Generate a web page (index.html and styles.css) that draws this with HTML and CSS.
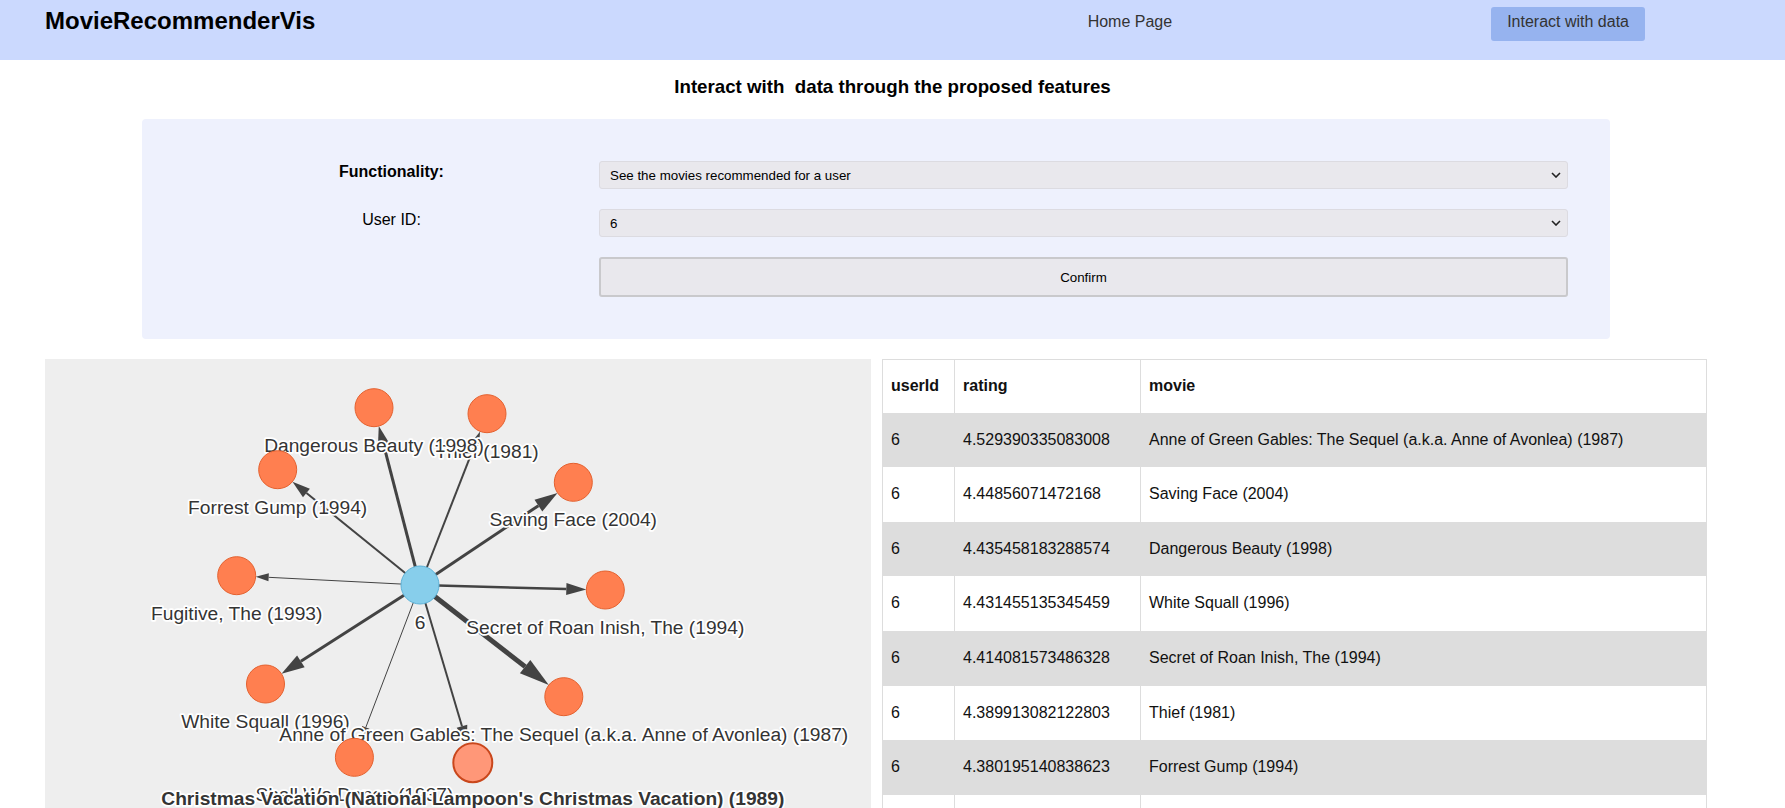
FILE: index.html
```html
<!DOCTYPE html>
<html lang="en">
<head>
<meta charset="utf-8">
<title>MovieRecommenderVis</title>
<link rel="stylesheet" href="styles.css">
</head>
<body>
<header class="topbar">
  <div class="brand">MovieRecommenderVis</div>
  <nav class="nav">
    <a class="nav-link" href="#">Home Page</a>
    <a class="nav-link active" href="#">Interact with data</a>
  </nav>
</header>
<main>
  <h3 class="page-title">Interact with&nbsp; data through the proposed features</h3>
  <section class="controls">
    <label class="ctl-label strong">Functionality:</label>
    <div class="select-wrap">
      <select class="select"><option>See the movies recommended for a user</option></select>
      <svg class="chev" width="10" height="6" viewBox="0 0 10 6"><path d="M1 1 L5 5 L9 1" fill="none" stroke="#222" stroke-width="1.6"/></svg>
    </div>
    <label class="ctl-label">User ID:</label>
    <div class="select-wrap">
      <select class="select"><option>6</option></select>
      <svg class="chev" width="10" height="6" viewBox="0 0 10 6"><path d="M1 1 L5 5 L9 1" fill="none" stroke="#222" stroke-width="1.6"/></svg>
    </div>
    <div></div>
    <button class="confirm" type="button">Confirm</button>
  </section>
  <section class="results">
    <div class="graph">
      <svg class="graph-svg" width="826" height="470" viewBox="0 0 826 470">
        <g class="edges">
          <line x1="375" y1="226" x2="339.55" y2="89.35" stroke-width="3"/>
          <polygon points="333.77,67.09 346.33,87.59 332.77,91.11"/>
          <line x1="375" y1="226" x2="428.52" y2="89.15" stroke-width="2"/>
          <polygon points="435.08,72.39 433.64,91.15 423.40,87.15"/>
          <line x1="375" y1="226" x2="261.45" y2="133.99" stroke-width="2"/>
          <polygon points="247.46,122.66 264.91,129.72 257.99,138.26"/>
          <line x1="375" y1="226" x2="223.66" y2="218.32" stroke-width="1"/>
          <polygon points="210.68,217.66 223.86,214.33 223.46,222.31"/>
          <line x1="375" y1="226" x2="493.40" y2="146.68" stroke-width="3"/>
          <polygon points="512.51,133.88 497.30,152.50 489.50,140.86"/>
          <line x1="375" y1="226" x2="521.32" y2="229.95" stroke-width="2.5"/>
          <polygon points="541.31,230.49 521.16,235.95 521.48,223.95"/>
          <line x1="375" y1="226" x2="255.87" y2="302.34" stroke-width="3"/>
          <polygon points="236.5,314.75 252.09,296.45 259.65,308.23"/>
          <line x1="375" y1="226" x2="480.11" y2="307.65" stroke-width="5"/>
          <polygon points="503.8,326.05 474.90,314.36 485.32,300.94"/>
          <line x1="375" y1="226" x2="320.79" y2="368.39" stroke-width="1"/>
          <polygon points="316.16,380.54 317.05,366.97 324.53,369.81"/>
          <line x1="375" y1="226" x2="416.97" y2="367.28" stroke-width="2"/>
          <polygon points="422.10,384.53 411.70,368.85 422.24,365.71"/>
        </g>
        <g class="node">
          <circle cx="442" cy="54.7" r="19"/>
          <text class="lbl" x="442" y="98.7">Thief (1981)</text>
        </g>
        <g class="node">
          <circle cx="329" cy="48.7" r="19"/>
          <text class="lbl" x="329" y="92.7">Dangerous Beauty (1998)</text>
        </g>
        <g class="node">
          <circle cx="232.7" cy="110.7" r="19"/>
          <text class="lbl" x="232.7" y="154.7">Forrest Gump (1994)</text>
        </g>
        <g class="node">
          <circle cx="191.7" cy="216.7" r="19"/>
          <text class="lbl" x="191.7" y="260.7">Fugitive, The (1993)</text>
        </g>
        <g class="node">
          <circle cx="528.3" cy="123.3" r="19"/>
          <text class="lbl" x="528.3" y="167.3">Saving Face (2004)</text>
        </g>
        <g class="node">
          <circle cx="560.3" cy="231" r="19"/>
          <text class="lbl" x="560.3" y="275">Secret of Roan Inish, The (1994)</text>
        </g>
        <g class="node user">
          <circle cx="375" cy="226" r="19"/>
          <text class="lbl" x="375" y="269.5">6</text>
        </g>
        <g class="node">
          <circle cx="220.5" cy="325" r="19"/>
          <text class="lbl" x="220.5" y="369">White Squall (1996)</text>
        </g>
        <g class="node">
          <circle cx="518.8" cy="337.7" r="19"/>
          <text class="lbl" x="518.8" y="381.7">Anne of Green Gables: The Sequel (a.k.a. Anne of Avonlea) (1987)</text>
        </g>
        <g class="node">
          <circle cx="309.4" cy="398.3" r="19"/>
          <text class="lbl" x="309.4" y="442.3">Shall We Dance (1937)</text>
        </g>
        <g class="node hover">
          <circle cx="427.8" cy="403.7" r="19.5"/>
          <text class="lbl bold" x="427.8" y="445.5">Christmas Vacation (National Lampoon's Christmas Vacation) (1989)</text>
        </g>
      </svg>
    </div>
    <table class="recs">
      <colgroup>
        <col class="c-user">
        <col class="c-rating">
        <col class="c-movie">
      </colgroup>
      <thead>
        <tr><th>userId</th><th>rating</th><th>movie</th></tr>
      </thead>
      <tbody>
        <tr><td>6</td><td>4.529390335083008</td><td>Anne of Green Gables: The Sequel (a.k.a. Anne of Avonlea) (1987)</td></tr>
        <tr><td>6</td><td>4.44856071472168</td><td>Saving Face (2004)</td></tr>
        <tr><td>6</td><td>4.435458183288574</td><td>Dangerous Beauty (1998)</td></tr>
        <tr><td>6</td><td>4.431455135345459</td><td>White Squall (1996)</td></tr>
        <tr><td>6</td><td>4.414081573486328</td><td>Secret of Roan Inish, The (1994)</td></tr>
        <tr><td>6</td><td>4.389913082122803</td><td>Thief (1981)</td></tr>
        <tr><td>6</td><td>4.380195140838623</td><td>Forrest Gump (1994)</td></tr>
        <tr><td>6</td><td>4.371287822723389</td><td>Fugitive, The (1993)</td></tr>
        <tr><td>6</td><td>4.368710517883301</td><td>Shall We Dance (1937)</td></tr>
        <tr><td>6</td><td>4.362518310546875</td><td>Christmas Vacation (National Lampoon's Christmas Vacation) (1989)</td></tr>
      </tbody>
    </table>
  </section>
</main>
</body>
</html>
```

FILE: styles.css
```css
* { box-sizing: border-box; }

html, body {
  margin: 0;
  padding: 0;
  background: #fff;
}

body {
  font-family: "Liberation Sans", Arial, sans-serif;
  color: #000;
  overflow: hidden;
}

.topbar {
  display: flex;
  align-items: flex-start;
  height: 60px;
  background: #cbd9fe;
  padding: 0 140px 0 45px;
}

.brand {
  margin-top: 7px;
  font-size: 24px;
  line-height: 27.6px;
  font-weight: bold;
  color: #000;
}

.nav {
  margin-left: auto;
  margin-top: 7px;
  display: flex;
  align-items: flex-start;
  gap: 303px;
}

.nav-link {
  font-size: 16px;
  line-height: 18.4px;
  color: #333;
  text-decoration: none;
  padding: 6px 16px 10px;
  border-radius: 3px;
}

.nav-link.active {
  background: #96b3ef;
}

.page-title {
  margin: 16px 0 21.5px;
  font-size: 18.72px;
  line-height: 21.5px;
  font-weight: bold;
  text-align: center;
}

.controls {
  margin-left: 142px;
  width: 1468px;
  padding: 42px;
  background: #eef1fd;
  border-radius: 4px;
  display: grid;
  grid-template-columns: 415px 1fr;
  row-gap: 20px;
}

.ctl-label {
  align-self: start;
  padding-top: 2px;
  font-size: 16px;
  line-height: 18.4px;
  text-align: center;
}

.ctl-label.strong {
  font-weight: bold;
}

.select-wrap {
  position: relative;
  height: 28px;
}

.select {
  appearance: none;
  -webkit-appearance: none;
  width: 100%;
  height: 28px;
  margin: 0;
  padding: 0 30px 0 10px;
  background: #e9e8ed;
  border: 1px solid #dcdbe1;
  border-radius: 3px;
  font-family: "Liberation Sans", Arial, sans-serif;
  font-size: 13.33px;
  color: #000;
}

.chev {
  position: absolute;
  right: 7px;
  top: 11px;
  pointer-events: none;
}

.confirm {
  height: 40px;
  width: 100%;
  margin: 0;
  background: #e9e8ed;
  border: 2px solid #c9c9cc;
  border-radius: 3px;
  font-family: "Liberation Sans", Arial, sans-serif;
  font-size: 13.33px;
  color: #000;
}

.results {
  display: flex;
  align-items: flex-start;
  gap: 11px;
  margin-top: 20px;
  padding-left: 45px;
}

.graph {
  flex: none;
  width: 826px;
  height: 470px;
  background: #eeeeee;
  overflow: hidden;
}

.graph-svg {
  display: block;
}

.edges line {
  stroke: #434343;
}

.edges polygon {
  fill: #434343;
}

.node circle {
  fill: #ff7f50;
  stroke: #e4612f;
  stroke-width: 1;
}

.node.user circle {
  fill: #87ceeb;
  stroke: #5eb2d8;
}

.node.hover circle {
  fill: #ff9778;
  stroke: #c9471c;
  stroke-width: 2;
}

.lbl {
  font-family: "Liberation Sans", Arial, sans-serif;
  font-size: 19.2px;
  fill: #343434;
  stroke: #ffffff;
  stroke-width: 3.5px;
  stroke-linejoin: round;
  paint-order: stroke;
  text-anchor: middle;
}

.lbl.bold {
  font-weight: bold;
}

.recs {
  flex: none;
  width: 824px;
  table-layout: fixed;
  border-collapse: collapse;
  border: 1px solid #dddddd;
  font-size: 16px;
}

.c-user { width: 72px; }
.c-rating { width: 186px; }
.c-movie { width: 566px; }

.recs th,
.recs td {
  padding: 18px 8px;
  line-height: 18.6px;
  text-align: left;
  vertical-align: middle;
  border-left: 1px solid #dddddd;
  border-right: 1px solid #dddddd;
  color: #111;
  white-space: nowrap;
}

.recs th {
  padding-top: 17px;
  padding-bottom: 17px;
  font-weight: bold;
}

.recs tbody tr:nth-child(odd) {
  background: #dddddd;
}
```
